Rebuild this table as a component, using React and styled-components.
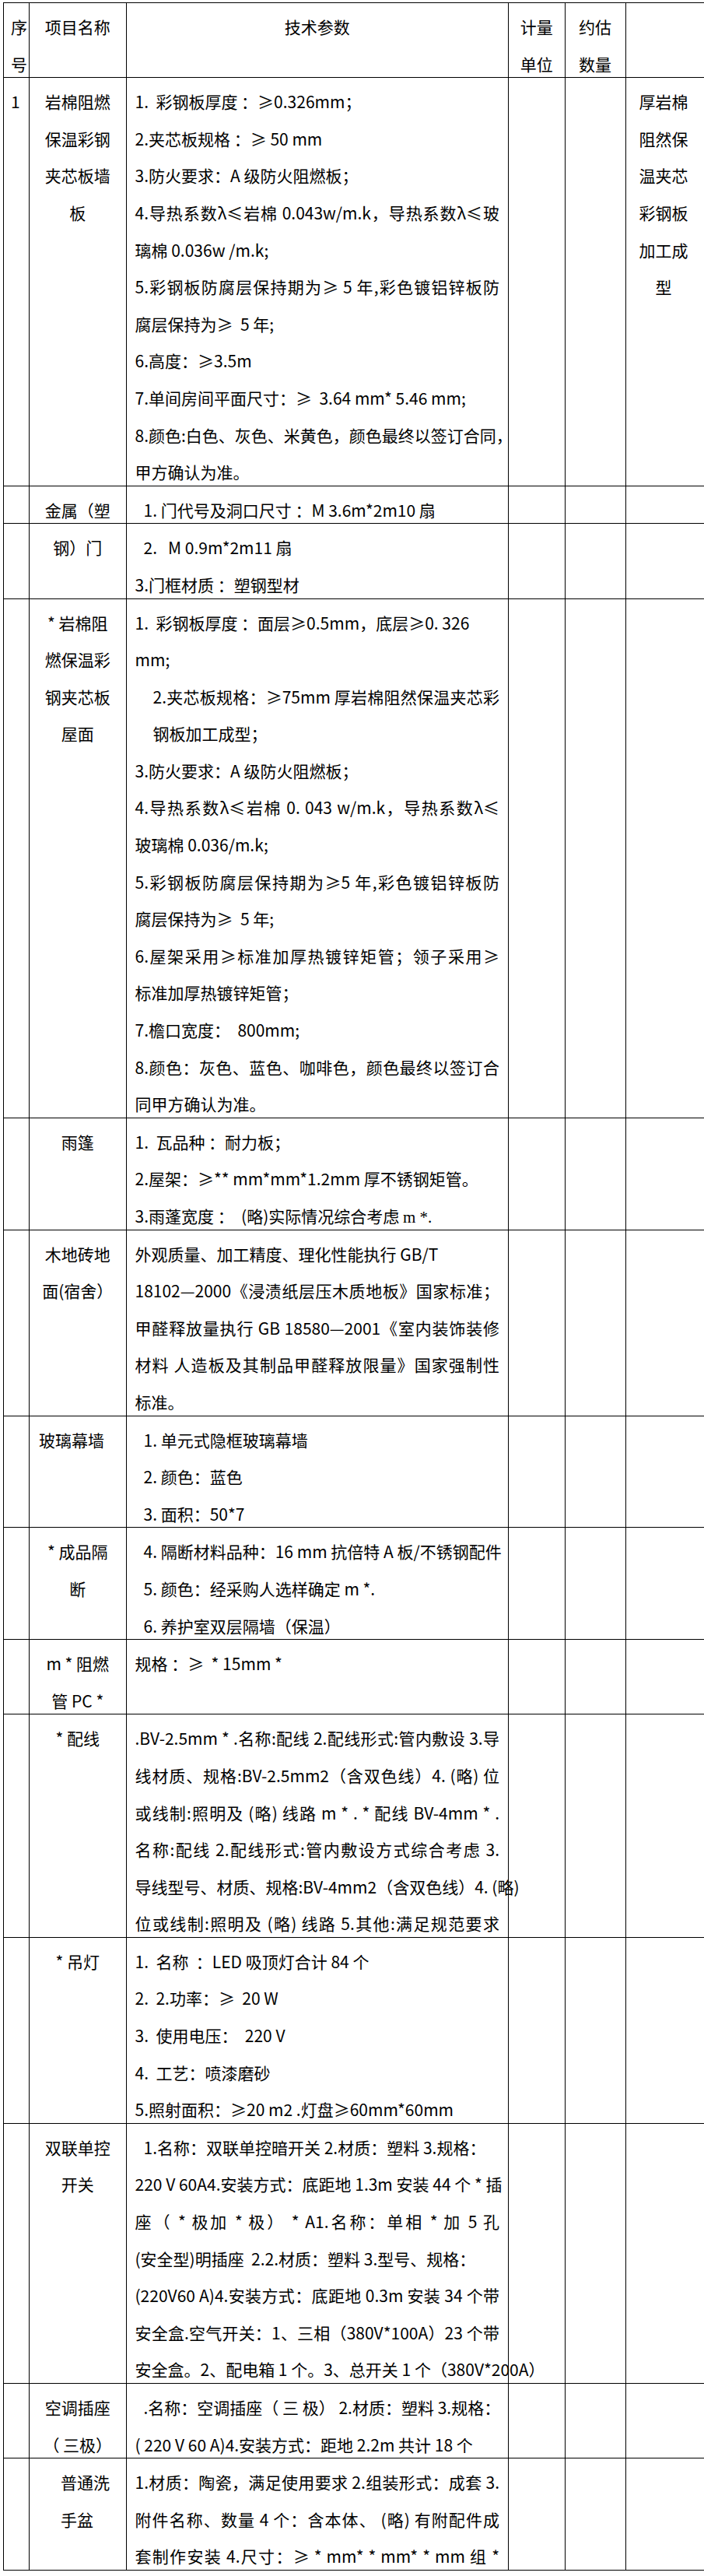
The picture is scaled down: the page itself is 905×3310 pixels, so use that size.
import styled, { createGlobalStyle } from "styled-components";

const GlobalStyle = createGlobalStyle`
  html, body {
    margin: 0;
    padding: 0;
    background: #fff;
    overflow-x: hidden;
  }
  body {
    font-family: "Noto Sans CJK SC", "Liberation Sans", sans-serif;
    color: #000;
  }
`;

// [text, flags]  flags: "j" = justified line, "i" = small indent, "ii" = deeper indent
const rows = [
  {
    no: "1",
    name: ["岩棉阻燃", "保温彩钢", "夹芯板墙", "板"],
    params: [
      ["1.  彩钢板厚度 ：≥0.326mm；"],
      ["2.夹芯板规格 ：≥ 50 mm"],
      ["3.防火要求：A 级防火阻燃板；"],
      ["4.导热系数λ≤岩棉 0.043w/m.k，导热系数λ≤玻", "j"],
      ["璃棉 0.036w /m.k;"],
      ["5.彩钢板防腐层保持期为≥ 5 年,彩色镀铝锌板防", "j"],
      ["腐层保持为≥  5 年;"],
      ["6.高度：≥3.5m"],
      ["7.单间房间平面尺寸：≥  3.64 mm* 5.46 mm;"],
      ["8.颜色:白色、灰色、米黄色，颜色最终以签订合同，", "j"],
      ["甲方确认为准。"],
    ],
    note: ["厚岩棉", "阻然保", "温夹芯", "彩钢板", "加工成", "型"],
  },
  {
    name: ["金属（塑"],
    params: [["1. 门代号及洞口尺寸 ：M 3.6m*2m10 扇", "i"]],
  },
  {
    name: ["钢）门"],
    params: [["2.   M 0.9m*2m11 扇", "i"], ["3.门框材质 ：塑钢型材"]],
  },
  {
    name: ["* 岩棉阻", "燃保温彩", "钢夹芯板", "屋面"],
    params: [
      ["1.  彩钢板厚度 ：面层≥0.5mm，底层≥0. 326"],
      ["mm;"],
      ["2.夹芯板规格：≥75mm 厚岩棉阻然保温夹芯彩", "ii j"],
      ["钢板加工成型；", "ii"],
      ["3.防火要求：A 级防火阻燃板；"],
      ["4.导热系数λ≤岩棉 0. 043 w/m.k，导热系数λ≤", "j"],
      ["玻璃棉 0.036/m.k;"],
      ["5.彩钢板防腐层保持期为≥5  年,彩色镀铝锌板防", "j"],
      ["腐层保持为≥  5 年;"],
      ["6.屋架采用≥标准加厚热镀锌矩管；领子采用≥", "j"],
      ["标准加厚热镀锌矩管；"],
      ["7.檐口宽度：  800mm;"],
      ["8.颜色：灰色、蓝色、咖啡色，颜色最终以签订合", "j"],
      ["同甲方确认为准。"],
    ],
  },
  {
    name: ["雨篷"],
    params: [
      ["1.  瓦品种 ：耐力板；"],
      ["2.屋架：≥** mm*mm*1.2mm 厚不锈钢矩管。"],
      ["3.雨蓬宽度 ：  (略)实际情况综合考虑 ", "", "m *."],
    ],
  },
  {
    name: ["木地砖地", "面(宿舍）"],
    params: [
      ["外观质量、加工精度、理化性能执行 GB/T"],
      ["18102—2000《浸渍纸层压木质地板》国家标准；", "j"],
      ["甲醛释放量执行 GB 18580—2001《室内装饰装修", "j"],
      ["材料  人造板及其制品甲醛释放限量》国家强制性", "j"],
      ["标准。"],
    ],
  },
  {
    name: ["玻璃幕墙"],
    nameInset: 12,
    params: [
      ["1. 单元式隐框玻璃幕墙", "i"],
      ["2. 颜色：蓝色", "i"],
      ["3. 面积：50*7", "i"],
    ],
  },
  {
    name: ["* 成品隔", "断"],
    params: [
      ["4. 隔断材料品种：16 mm 抗倍特 A 板/不锈钢配件", "i j"],
      ["5. 颜色：经采购人选样确定 m *.", "i"],
      ["6. 养护室双层隔墙（保温）", "i"],
    ],
  },
  {
    name: ["m * 阻燃", "管 PC *"],
    params: [["规格 ：≥  * 15mm *"]],
  },
  {
    name: ["* 配线"],
    params: [
      [".BV-2.5mm * .名称:配线  2.配线形式:管内敷设 3.导", "j"],
      ["线材质、规格:BV-2.5mm2（含双色线）4. (略)  位", "j"],
      ["或线制:照明及  (略)  线路 m * . *  配线  BV-4mm * .", "j"],
      ["名称:配线  2.配线形式:管内敷设方式综合考虑 3.", "j"],
      ["导线型号、材质、规格:BV-4mm2（含双色线）4. (略)", "j"],
      ["位或线制:照明及  (略)  线路 5.其他:满足规范要求", "j"],
    ],
  },
  {
    name: ["* 吊灯"],
    params: [
      ["1.  名称  ：LED 吸顶灯合计 84 个"],
      ["2.  2.功率：≥  20 W"],
      ["3.  使用电压：  220 V"],
      ["4.  工艺：喷漆磨砂"],
      ["5.照射面积：≥20 m2 .灯盘≥60mm*60mm"],
    ],
  },
  {
    name: ["双联单控", "开关"],
    params: [
      ["1.名称：双联单控暗开关 2.材质：塑料 3.规格：", "i"],
      ["220 V 60A4.安装方式：底距地 1.3m 安装 44 个  *  插", "j"],
      ["座（ * 极加 * 极） * A1.名称：单相 * 加 5 孔", "j"],
      ["(安全型)明插座  2.2.材质：塑料 3.型号、规格："],
      ["(220V60 A)4.安装方式：底距地 0.3m 安装 34 个带", "j"],
      ["安全盒.空气开关：1、三相（380V*100A）23 个带", "j"],
      ["安全盒。2、配电箱 1 个。3、总开关 1 个（380V*200A）", "j"],
    ],
  },
  {
    name: ["空调插座", "（ 三极）"],
    params: [
      [".名称：空调插座（ 三  极） 2.材质：塑料 3.规格：", "i j"],
      ["( 220 V 60 A)4.安装方式：距地 2.2m 共计 18 个"],
    ],
  },
  {
    name: ["普通洗", "手盆"],
    nameInset: 40,
    params: [
      ["1.材质：陶瓷，满足使用要求 2.组装形式：成套 3.", "j"],
      ["附件名称、数量 4 个：含本体、  (略)  有附配件成", "j"],
      ["套制作安装 4.尺寸：≥ * mm* * mm* * mm 组  *", "j"],
    ],
  },
];

function indentOf(flags = "") {
  if (flags.includes("ii")) return 23;
  if (flags.includes("i")) return 11;
  return 0;
}

export default function App() {
  return (
    <Page>
      <GlobalStyle />
      <Sheet>
        <colgroup>
          <col style={{ width: 33 }} />
          <col style={{ width: 124.5 }} />
          <col style={{ width: 491.5 }} />
          <col style={{ width: 72.5 }} />
          <col style={{ width: 78 }} />
          <col style={{ width: 108 }} />
        </colgroup>
        <tbody>
          <tr>
            <NoCell>
              <Line>序</Line>
              <Line>号</Line>
            </NoCell>
            <NameCell>
              <Line>项目名称</Line>
            </NameCell>
            <ParamCell $center>
              <Line>技术参数</Line>
            </ParamCell>
            <CenterCell>
              <Line>计量</Line>
              <Line>单位</Line>
            </CenterCell>
            <CenterCell>
              <Line>约估</Line>
              <Line>数量</Line>
            </CenterCell>
            <NoteCell />
          </tr>
          {rows.map((row, i) => (
            <tr key={i}>
              <NoCell>{row.no && <Line>{row.no}</Line>}</NoCell>
              <NameCell $inset={row.nameInset}>
                {row.name.map((n) => (
                  <Line key={n}>{n}</Line>
                ))}
              </NameCell>
              <ParamCell>
                {row.params.map(([text, flags = "", serif], k) => (
                  <Line key={k} $indent={indentOf(flags)} $full={flags.includes("j")}>
                    {text}
                    {serif && <Serif>{serif}</Serif>}
                  </Line>
                ))}
              </ParamCell>
              <CenterCell />
              <CenterCell />
              <NoteCell>
                {row.note && row.note.map((n) => <Line key={n}>{n}</Line>)}
              </NoteCell>
            </tr>
          ))}
        </tbody>
      </Sheet>
    </Page>
  );
}

const Page = styled.div`
  padding: 3px 0 0 4px;
  overflow: hidden;
`;

const Sheet = styled.table`
  border-collapse: collapse;
  table-layout: fixed;
  width: 907.5px;
  font-size: 21px;
`;

const Cell = styled.td`
  border: 1px solid #000;
  vertical-align: top;
  padding: 0;
`;

const NoCell = styled(Cell)`
  padding-left: 9px;
  text-align: left;
`;

const NameCell = styled(Cell)`
  text-align: ${(p) => (p.$inset ? "left" : "center")};
  padding-left: ${(p) => (p.$inset ? `${p.$inset}px` : "0")};
`;

const ParamCell = styled(Cell)`
  padding: 0 11px;
  text-align: ${(p) => (p.$center ? "center" : "left")};
`;

const CenterCell = styled(Cell)`
  text-align: center;
`;

const NoteCell = styled(Cell)`
  text-align: center;
  padding-right: 10px;
`;

const Line = styled.div`
  box-sizing: border-box;
  height: 47.6px;
  padding-top: 14px;
  padding-left: ${(p) => (p.$indent ? `${p.$indent}px` : "0")};
  line-height: 33.6px;
  white-space: ${(p) => (p.$full ? "nowrap" : "pre")};
  text-align: ${(p) => (p.$full ? "justify" : "inherit")};
  text-align-last: ${(p) => (p.$full ? "justify" : "auto")};
`;

const Serif = styled.span`
  font-family: "Liberation Serif", serif;
`;
